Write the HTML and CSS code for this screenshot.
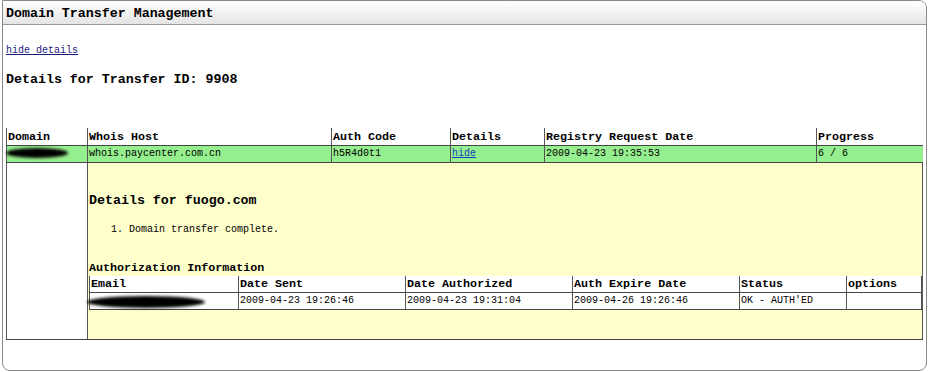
FILE: index.html
```html
<!DOCTYPE html>
<html lang="en">
<head>
  <meta charset="UTF-8">
  <title>Domain Transfer Management</title>
  <link rel="stylesheet" href="styles.css">
</head>
<body>

  <div class="panel">
    <div class="panel-head">Domain Transfer Management</div>

    <div class="panel-body">
      <a href="#" class="toggle">hide details</a>

      <h2>Details for Transfer ID: 9908</h2>

      <table class="transfers">
        <colgroup>
          <col style="width: 81px">
          <col style="width: 244px">
          <col style="width: 119px">
          <col style="width: 94px">
          <col style="width: 272px">
          <col style="width: 106px">
        </colgroup>
        <tr>
          <th>Domain</th>
          <th>Whois Host</th>
          <th>Auth Code</th>
          <th>Details</th>
          <th>Registry Request Date</th>
          <th>Progress</th>
        </tr>
        <tr class="done">
          <td><span class="redact redact-domain"></span></td>
          <td>whois.paycenter.com.cn</td>
          <td>h5R4d0t1</td>
          <td><a href="#" class="row-link">hide</a></td>
          <td>2009-04-23 19:35:53</td>
          <td>6 / 6</td>
        </tr>
        <tr class="details-row">
          <td class="blank"></td>
          <td colspan="5" class="details">
            <h3>Details for fuogo.com</h3>
            <ol>
              <li>Domain transfer complete.</li>
            </ol>

            <h4>Authorization Information</h4>
            <table class="auth">
              <colgroup>
                <col style="width: 149px">
                <col style="width: 167px">
                <col style="width: 167px">
                <col style="width: 167px">
                <col style="width: 107px">
                <col style="width: 75px">
              </colgroup>
              <tr>
                <th>Email</th>
                <th>Date Sent</th>
                <th>Date Authorized</th>
                <th>Auth Expire Date</th>
                <th>Status</th>
                <th>options</th>
              </tr>
              <tr>
                <td><span class="redact redact-email"></span></td>
                <td>2009-04-23 19:26:46</td>
                <td>2009-04-23 19:31:04</td>
                <td>2009-04-26 19:26:46</td>
                <td>OK - AUTH'ED</td>
                <td></td>
              </tr>
            </table>
          </td>
        </tr>
      </table>
    </div>
  </div>

</body>
</html>
```

FILE: styles.css
```css
body {
  margin: 0;
  padding: 0;
  background-color: #fff;
  color: #000;
  font-family: "Liberation Mono", "DejaVu Sans Mono", monospace;
  font-size: 10px;
}

.panel {
  margin: 0 2px;
  height: 371px;
  box-sizing: border-box;
  border: 1px solid #8a8a8a;
  border-radius: 0 8px 8px 8px;
  overflow: hidden;
}

.panel-head {
  height: 23px;
  line-height: 26px;
  padding-left: 3px;
  border-bottom: 1px solid #999;
  background: linear-gradient(#ffffff, #e4e4e4);
  font-size: 13.3px;
  font-weight: bold;
}

.panel-body {
  padding: 0 3px;
}

.toggle {
  display: block;
  margin-top: 19px;
  line-height: 14px;
  color: #1a1a7a;
  width: max-content;
}

h2 {
  margin: 14px 0 40px;
  font-size: 13.3px;
  line-height: 16px;
}

table {
  border-collapse: collapse;
  table-layout: fixed;
}

.transfers {
  width: 916px;
}

th {
  text-align: left;
  font-size: 11.7px;
  font-weight: bold;
  height: 17px;
  padding: 0 0 0 1px;
  border-left: 1px solid #555;
  border-bottom: 1px solid #444;
  vertical-align: bottom;
  line-height: 16px;
}

td {
  padding: 0 0 0 1px;
  height: 16px;
  line-height: 16px;
  border-left: 1px solid #555;
  border-bottom: 1px solid #444;
  white-space: nowrap;
  overflow: visible;
}

.done td {
  background-color: #96ef8e;
}

.row-link {
  color: #1040c0;
}

.redact {
  display: inline-block;
  background-color: #000;
  border-radius: 50%;
  filter: blur(1.5px);
  vertical-align: middle;
}

.redact-domain {
  width: 62px;
  height: 10px;
  margin-left: -2px;
}

.redact-email {
  width: 118px;
  height: 12px;
  margin-left: -4px;
  margin-top: 3px;
}

.details-row td {
  vertical-align: top;
}

.details {
  background-color: #ffffcc;
  border-right: 1px solid #555;
  padding: 30px 0 29px 1px;
}

h3 {
  margin: 0;
  font-size: 13.3px;
  line-height: 16px;
}

ol {
  margin: 14px 0 0;
  padding-left: 40px;
  line-height: 14px;
}

h4 {
  margin: 24px 0 0;
  font-size: 11.7px;
  line-height: 15px;
}

.auth {
  width: 832px;
  background-color: #fff;
  border-right: 1px solid #555;
}

.auth th,
.auth td {
  height: 16px;
}
```
